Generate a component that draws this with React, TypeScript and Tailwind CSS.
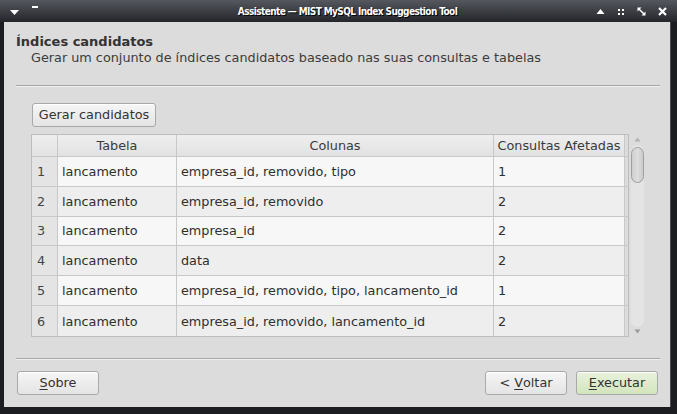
import React from "react"

const rows = [
  { n: 1, tabela: "lancamento", colunas: "empresa_id, removido, tipo", qtd: "1" },
  { n: 2, tabela: "lancamento", colunas: "empresa_id, removido", qtd: "2" },
  { n: 3, tabela: "lancamento", colunas: "empresa_id", qtd: "2" },
  { n: 4, tabela: "lancamento", colunas: "data", qtd: "2" },
  { n: 5, tabela: "lancamento", colunas: "empresa_id, removido, tipo, lancamento_id", qtd: "1" },
  { n: 6, tabela: "lancamento", colunas: "empresa_id, removido, lancamento_id", qtd: "2" },
]

function TitleBar() {
  return (
    <div className="relative flex h-[22px] items-center bg-gradient-to-b from-[#55585e] to-[#24262b]">
      {/* left controls */}
      <svg width="12" height="8" viewBox="0 0 12 8" className="absolute left-[9px] top-[9px]">
        <path d="M1 1h9l-4.5 5z" fill="#fff" />
      </svg>
      <div className="absolute left-[32px] top-[6px] h-[2px] w-[6px] bg-white" />
      <div
        className="w-full pl-[18px] text-center text-[10px] font-bold tracking-[-0.6px] text-white"
        style={{ fontFamily: '"DejaVu Sans Condensed", "DejaVu Sans", sans-serif', textShadow: "1px 1px 0 #000" }}
      >
        Assistente — MIST MySQL Index Suggestion Tool
      </div>
      {/* right controls */}
      <div className="absolute right-[10px] top-[7px] flex items-center gap-[12px]">
        <svg width="9" height="7" viewBox="0 0 9 7">
          <path d="M4.5 1l4 5h-8z" fill="#fff" />
        </svg>
        <svg width="8" height="8" viewBox="0 0 8 8">
          <rect x="1" y="1" width="2" height="2" fill="#fff" />
          <rect x="5" y="1" width="2" height="2" fill="#fff" />
          <rect x="1" y="5" width="2" height="2" fill="#fff" />
          <rect x="5" y="5" width="2" height="2" fill="#fff" />
        </svg>
        <svg width="9" height="9" viewBox="0 0 9 9">
          <path d="M0.5 0.5h4l-4 4z" fill="#fff" />
          <path d="M8.5 8.5h-4l4-4z" fill="#fff" />
          <path d="M2 2l5 5" stroke="#fff" strokeWidth="1.5" />
        </svg>
        <svg width="9" height="9" viewBox="0 0 9 9">
          <path d="M1 1l7 7M8 1l-7 7" stroke="#fff" strokeWidth="2.2" />
        </svg>
      </div>
    </div>
  )
}

function Btn({ children, className = "" }: { children: React.ReactNode; className?: string }) {
  return (
    <button
      className={
        "flex h-[24px] items-center justify-center rounded-[3px] border border-[#a9a9a9] text-[12.8px] text-[#333] shadow-[inset_0_1px_0_#fff] " +
        className
      }
    >
      {children}
    </button>
  )
}

function ScrollBar() {
  return (
    <div className="relative ml-[1px] w-[15px]">
      <svg width="7" height="5" viewBox="0 0 7 5" className="absolute left-[4px] top-[3px]">
        <path d="M3.5 0.5l3 4h-6z" fill="#b2b2b2" />
      </svg>
      <div className="absolute left-[1px] top-[11px] bottom-[10px] w-[13px] rounded-[7px] bg-[#e4e4e4]" />
      <div className="absolute left-[1px] top-[13px] h-[36px] w-[13px] rounded-[7px] border border-[#9f9f9f] bg-gradient-to-r from-[#cfcfcf] via-[#dedede] to-[#cacaca]" />
      <svg width="7" height="5" viewBox="0 0 7 5" className="absolute bottom-[3px] left-[4px]">
        <path d="M0.5 0.5h6l-3 4z" fill="#9a9a9a" />
      </svg>
    </div>
  )
}

function Table() {
  return (
    <div className="mx-[15px] mt-[7px] flex h-[203px]">
      <div className="flex flex-1 flex-col border border-[#bdbdbd] bg-[#dcdcdc]">
        <div className="flex h-[22px] border-b border-[#c8c8c8] text-[12.8px] text-[#3a3a3a]">
          <div className="w-[26px] border-r border-[#c8c8c8] bg-gradient-to-b from-[#eeeeee] to-[#e2e2e2]" />
          <div className="flex w-[119px] items-center justify-center border-r border-[#c8c8c8] bg-gradient-to-b from-[#eeeeee] to-[#e2e2e2]">
            Tabela
          </div>
          <div className="flex w-[317px] items-center justify-center border-r border-[#c8c8c8] bg-gradient-to-b from-[#eeeeee] to-[#e2e2e2]">
            Colunas
          </div>
          <div className="flex w-[131px] items-center justify-center whitespace-nowrap border-r border-[#c8c8c8] bg-gradient-to-b from-[#eeeeee] to-[#e2e2e2]">
            Consultas Afetadas
          </div>
        </div>
        {rows.map((r, i) => (
          <div
            key={r.n}
            className={"flex h-[30px] text-[12.8px] text-[#2f2f2f] " + (i < rows.length - 1 ? "border-b border-[#c8c8c8]" : "")}
          >
            <div className="flex w-[26px] items-center border-r border-[#c8c8c8] bg-[#e4e4e4] pl-[5px] text-[#444]">
              {r.n}
            </div>
            <div
              className={
                "flex w-[119px] items-center border-r border-[#c8c8c8] pl-[4px] " +
                (i % 2 === 0 ? "bg-[#f7f7f7]" : "bg-[#eeeeee]")
              }
            >
              {r.tabela}
            </div>
            <div
              className={
                "flex w-[317px] items-center border-r border-[#c8c8c8] pl-[4px] " +
                (i % 2 === 0 ? "bg-[#f7f7f7]" : "bg-[#eeeeee]")
              }
            >
              {r.colunas}
            </div>
            <div
              className={
                "flex w-[131px] items-center border-r border-[#c8c8c8] pl-[4px] " +
                (i % 2 === 0 ? "bg-[#f7f7f7]" : "bg-[#eeeeee]")
              }
            >
              {r.qtd}
            </div>
          </div>
        ))}
      </div>
      <ScrollBar />
    </div>
  )
}

export default function App() {
  return (
    <div
      className="flex h-[414px] w-[677px] flex-col overflow-hidden bg-[#1b1d21]"
      style={{ fontFamily: '"DejaVu Sans", "Liberation Sans", sans-serif' }}
    >
      <TitleBar />
      <div className="flex flex-1 pb-[7px] pl-[4px] pr-[6px]">
        <div className="flex flex-1 flex-col border-r border-[#4a4d52] bg-[#dcdcdc]">
          <div className="flex flex-1 flex-col bg-[#dcdcdc] pl-[12px] pr-[10px]">
            {/* Header */}
            <div className="mt-[12px] text-[13px] font-bold leading-[16px] text-[#333]">Índices candidatos</div>
            <div className="pl-[15px] text-[12.8px] leading-[16px] text-[#3b3b3b]">
              Gerar um conjunto de índices candidatos baseado nas suas consultas e tabelas
            </div>
            <div className="mt-[19px] h-[1px] bg-[#a8a8a8] shadow-[0_1px_0_#f0f0f0]" />

            {/* Body */}
            <div className="mt-[17px] pl-[16px]">
              <Btn className="w-[124px] bg-gradient-to-b from-[#f6f6f6] to-[#e4e4e4]">Gerar candidatos</Btn>
            </div>
            <Table />

            <div className="mt-[21px] h-[1px] bg-[#a8a8a8] shadow-[0_1px_0_#f0f0f0]" />

            {/* Footer */}
            <div className="mt-[12px] flex items-center">
              <Btn className="ml-[1px] w-[82px] bg-gradient-to-b from-[#f6f6f6] to-[#e4e4e4]">
                <span className="underline underline-offset-2">S</span>obre
              </Btn>
              <div className="flex-1" />
              <Btn className="w-[82px] bg-gradient-to-b from-[#f6f6f6] to-[#e4e4e4]">
                &lt; <span className="ml-[4px] underline underline-offset-2">V</span>oltar
              </Btn>
              <Btn className="ml-[9px] mr-[2px] w-[82px] bg-gradient-to-b from-[#e8f2dc] to-[#d2e5bd]">
                <span className="underline underline-offset-2">E</span>xecutar
              </Btn>
            </div>
          </div>
        </div>
      </div>
    </div>
  )
}
